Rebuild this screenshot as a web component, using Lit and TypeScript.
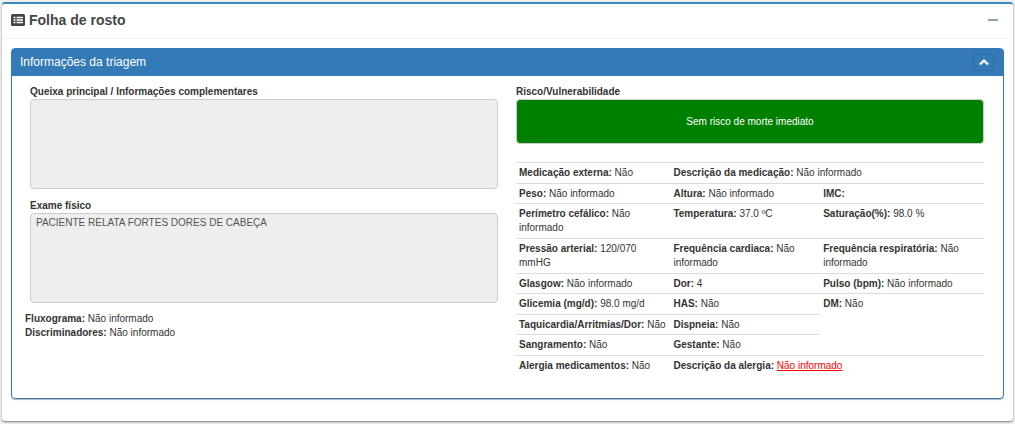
import { LitElement, html, css, svg, nothing } from "lit";
import { customElement, state } from "lit/decorators.js";

interface Cell {
  label: string;
  value?: string;
  colspan?: number;
  rowspan?: number;
  alert?: boolean;
}

interface Row {
  compact?: boolean;
  cells: Cell[];
}

const ROWS: Row[] = [
  {
    cells: [
      { label: "Medicação externa:", value: "Não" },
      { label: "Descrição da medicação:", value: "Não informado", colspan: 2 },
    ],
  },
  {
    compact: true,
    cells: [
      { label: "Peso:", value: "Não informado" },
      { label: "Altura:", value: "Não informado" },
      { label: "IMC:" },
    ],
  },
  {
    cells: [
      { label: "Perímetro cefálico:", value: "Não informado" },
      { label: "Temperatura:", value: "37.0 ºC" },
      { label: "Saturação(%):", value: "98.0 %" },
    ],
  },
  {
    cells: [
      { label: "Pressão arterial:", value: "120/070 mmHG" },
      { label: "Frequência cardiaca:", value: "Não informado" },
      { label: "Frequência respiratória:", value: "Não informado" },
    ],
  },
  {
    compact: true,
    cells: [
      { label: "Glasgow:", value: "Não informado" },
      { label: "Dor:", value: "4" },
      { label: "Pulso (bpm):", value: "Não informado" },
    ],
  },
  {
    cells: [
      { label: "Glicemia (mg/d):", value: "98.0 mg/d" },
      { label: "HAS:", value: "Não" },
      { label: "DM:", value: "Não", rowspan: 3 },
    ],
  },
  {
    compact: true,
    cells: [
      { label: "Taquicardia/Arritmias/Dor:", value: "Não" },
      { label: "Dispneia:", value: "Não" },
    ],
  },
  {
    cells: [
      { label: "Sangramento:", value: "Não" },
      { label: "Gestante:", value: "Não" },
    ],
  },
  {
    cells: [
      { label: "Alergia medicamentos:", value: "Não" },
      { label: "Descrição da alergia:", value: "Não informado", colspan: 2, alert: true },
    ],
  },
];

const listIcon = svg`
  <svg class="list-icon" viewBox="0 0 14 12" width="14" height="12" aria-hidden="true">
    <rect width="14" height="12" rx="1.500" fill="#444" />
    <path d="M2.500 3.500H4.500M5.500 3.500H12M2.500 6H4.500M5.500 6H12M2.500 8.500H4.500M5.500 8.500H12" stroke="#fff" stroke-width="1.500" />
  </svg>`;

@customElement("app-root")
export class AppRoot extends LitElement {
  @state() private boxOpen = true;
  @state() private panelOpen = true;

  static styles = css`
    :host {
      display: block;
      padding: 2px 2px 3px;
      background: #f1f1f1;
      color: #333;
      font: 10px/14px "Liberation Sans", Arial, sans-serif;
    }
    * {
      box-sizing: border-box;
    }
    .box {
      background: #fff;
      border-top: 2px solid #3c8dbc;
      border-radius: 3px;
      box-shadow: 0 1px 2px rgba(0, 0, 0, 0.5);
    }
    .box-header {
      display: flex;
      align-items: center;
      height: 35px;
      padding: 0 15px 2px 9px;
      gap: 4px;
      border-bottom: 1px solid #f4f4f4;
    }
    .box-title {
      flex: 1;
      margin: 0;
      font-size: 14px;
      line-height: 16px;
      color: #444;
    }
    .list-icon {
      display: block;
    }
    button {
      display: flex;
      align-items: center;
      justify-content: center;
      margin: 0;
      padding: 0;
      background: none;
      border: 0;
      cursor: pointer;
    }
    .minimize {
      width: 11px;
      height: 16px;
    }
    .box-body {
      padding: 9px 9px 22px;
    }
    .panel {
      border: 1px solid #337ab7;
      border-radius: 4px;
      box-shadow: 0 1px 1px rgba(0, 0, 0, 0.3);
    }
    .panel-header {
      display: flex;
      align-items: center;
      height: 27px;
      padding: 0 9px 1px 8px;
      background: #337ab7;
      color: #fff;
    }
    .panel-title {
      flex: 1;
      margin: 0;
      font-size: 12px;
      font-weight: normal;
      line-height: 16px;
    }
    .collapse {
      width: 21px;
      height: 17px;
      border: 1px solid #2e6da4;
      border-radius: 2px;
    }
    .panel-body {
      display: grid;
      grid-template-columns: 1fr 1fr;
      gap: 18px;
      padding: 9px 19px 22px 18px;
    }
    label {
      display: block;
      font-weight: bold;
    }
    textarea,
    .risk {
      display: block;
      width: 100%;
      margin: 0;
      border: 1px solid #ccc;
      border-radius: 4px;
      font: inherit;
    }
    textarea {
      height: 90px;
      margin-bottom: 10px;
      padding: 2px 5px;
      background: #eee;
      color: #555;
      resize: none;
    }
    .risk {
      height: 45px;
      margin-bottom: 18px;
      background: green;
      color: #fff;
      text-align: center;
    }
    .notes {
      margin: -1px -5px 0;
    }
    .notes p {
      margin: 0;
    }
    table {
      width: 100%;
      table-layout: fixed;
      border-collapse: separate;
      border-spacing: 0;
    }
    .col-a {
      width: 33%;
    }
    .col-b {
      width: 32%;
    }
    td {
      padding: 3px;
      border-top: 1px solid #ddd;
      vertical-align: top;
    }
    .compact td {
      padding-bottom: 2px;
    }
    .alert {
      color: red;
      text-decoration: underline;
    }
  `;

  private renderCell(c: Cell) {
    return html`<td colspan=${c.colspan ?? 1} rowspan=${c.rowspan ?? 1}>
      <b>${c.label}</b>
      ${c.alert ? html`<span class="alert">${c.value}</span>` : c.value ?? nothing}
    </td>`;
  }

  private renderPanelBody() {
    return html`
      <div class="panel-body">
        <div>
          <label for="complaint">Queixa principal / Informações complementares</label>
          <textarea id="complaint" readonly></textarea>
          <label for="exam">Exame físico</label>
          <textarea id="exam" readonly .value=${"PACIENTE RELATA FORTES DORES DE CABEÇA"}></textarea>
          <div class="notes">
            <p><b>Fluxograma:</b> Não informado</p>
            <p><b>Discriminadores:</b> Não informado</p>
          </div>
        </div>
        <div>
          <label for="risk">Risco/Vulnerabilidade</label>
          <input id="risk" class="risk" readonly .value=${"Sem risco de morte imediato"} />
          <table>
            <colgroup>
              <col class="col-a" />
              <col class="col-b" />
              <col />
            </colgroup>
            <tbody>
              ${ROWS.map(
                (r) => html`<tr class=${r.compact ? "compact" : "regular"}>
                  ${r.cells.map((c) => this.renderCell(c))}
                </tr>`
              )}
            </tbody>
          </table>
        </div>
      </div>
    `;
  }

  render() {
    return html`
      <section class="box">
        <header class="box-header">
          ${listIcon}
          <h1 class="box-title">Folha de rosto</h1>
          <button
            class="minimize"
            type="button"
            aria-label="Minimizar"
            aria-expanded=${this.boxOpen}
            @click=${() => (this.boxOpen = !this.boxOpen)}
          >
            <svg viewBox="0 0 10 2" width="10" height="2" aria-hidden="true">
              <rect width="10" height="2" rx="0.5" fill="#97a0b3" />
            </svg>
          </button>
        </header>
        ${this.boxOpen
          ? html`<div class="box-body">
              <section class="panel">
                <header class="panel-header">
                  <h2 class="panel-title">Informações da triagem</h2>
                  <button
                    class="collapse"
                    type="button"
                    aria-label="Recolher"
                    aria-expanded=${this.panelOpen}
                    @click=${() => (this.panelOpen = !this.panelOpen)}
                  >
                    <svg viewBox="0 0 10 7" width="10" height="7" aria-hidden="true">
                      <path d="M1 5.500L5 1.500L9 5.500" fill="none" stroke="#fff" stroke-width="2.200" />
                    </svg>
                  </button>
                </header>
                ${this.panelOpen ? this.renderPanelBody() : nothing}
              </section>
            </div>`
          : nothing}
      </section>
    `;
  }
}
